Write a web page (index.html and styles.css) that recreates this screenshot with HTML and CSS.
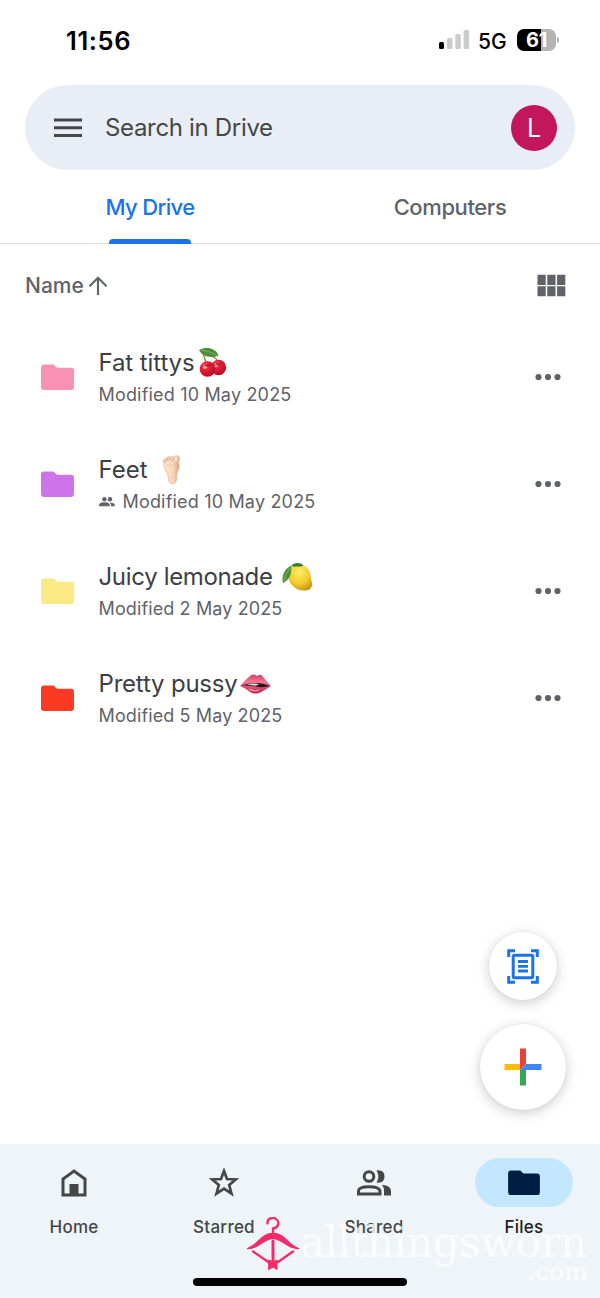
FILE: index.html
```html
<!DOCTYPE html>
<html lang="en">
<head>
<meta charset="utf-8">
<title>My Drive</title>
<link rel="stylesheet" href="styles.css">
</head>
<body>
<div class="screen">
  <header class="status">
    <span class="clock">11:56</span>
    <div class="status-right">
      <svg class="signal" width="31" height="20" viewBox="0 0 31 20"><rect x="0" y="12" width="5" height="7" rx="1.5"/><g fill="#cbcbcb"><rect x="8" y="8" width="5.500" height="11" rx="1.500"/><rect x="16.300" y="4" width="5.500" height="15" rx="1.500"/><rect x="24.600" y="0" width="5.500" height="19" rx="1.500"/></g></svg>
      <span class="network">5G</span>
      <div class="battery"><span class="level">61</span><i class="battery-tip"></i></div>
    </div>
  </header>

  <div class="search">
    <svg class="menu" width="28" height="20" viewBox="0 0 28 20" fill="#444746"><path d="M0 0.500h28v3H0zM0 8.300h28v3H0zM0 16.100h28v3H0z"/></svg>
    <span class="search-text">Search in Drive</span>
    <span class="avatar">L</span>
  </div>

  <nav class="tabs">
    <div class="tab tab-active"><span class="tab-label my-drive">My Drive</span><i class="tab-line"></i></div>
    <div class="tab"><span class="tab-label computers">Computers</span></div>
  </nav>

  <div class="sort">
    <span class="sort-label">Name</span>
    <svg class="arrow" width="20" height="20" viewBox="0 0 20 20" fill="none" stroke="#5f6368" stroke-width="2.100"><path d="M10 19V2M1.500 10.200L10 1.700l8.500 8.500"/></svg>
    <svg class="grid-icon" width="29" height="23" viewBox="0 0 29 23" fill="#5f6368"><path d="M.5.800h8.200v10.200H.500zM10.300.800h8.200v10.200h-8.200zM20.100.800h8.200v10.200h-8.200zM.5 12.300h8.200v10H.500zM10.300 12.300h8.200v10h-8.200zM20.100 12.300h8.200v10h-8.200z"/></svg>
  </div>

  <main class="files">
    <div class="file">
      <svg class="folder pink" viewBox="0 0 33 27"><path d="M3 .500h9.500l3.500 3.200h14a3 3 0 0 1 3 3V23a3 3 0 0 1-3 3H3a3 3 0 0 1-3-3V3.500a3 3 0 0 1 3-3z"/></svg>
      <div class="info">
        <div class="name"><span class="n1">Fat tittys</span>
          <svg class="emoji cherry" width="30" height="32" viewBox="0 0 30 32"><defs><radialGradient id="red" cx=".35" cy=".3" r=".8"><stop stop-color="#ff6a70"/><stop offset=".3" stop-color="#ed2139"/><stop offset="1" stop-color="#ac0a27"/></radialGradient></defs><path d="M4 4Q7 11 8.500 18M10 7q9 4 11 9" fill="none" stroke="#758a30" stroke-width="1.300"/><path d="M1 3C8-1 18 1 20.500 8.500 12 12 4 9 1 3z" fill="#4d8e38"/><path d="M3 3q8 1 16 5" fill="none" stroke="#8bb566" stroke-width=".8"/><circle cx="20.500" cy="20.500" r="7.700" fill="url(#red)"/><circle cx="9.500" cy="22" r="7.800" fill="url(#red)"/><path d="M7 18q3 2 6-.500M18 16.500q3 2 5 0" fill="none" stroke="#8e1024" stroke-width="1"/><ellipse cx="7" cy="20.500" rx="2" ry="1.200" fill="#ffb1b5"/><ellipse cx="18" cy="19.300" rx="1.500" ry="1" fill="#ff969b"/></svg>
        </div>
        <div class="meta"><span class="m1">Modified 10 May 2025</span></div>
      </div>
      <svg class="more" width="26" height="8" viewBox="0 0 26 8"><circle cx="3.500" cy="4" r="3.100"/><circle cx="13" cy="4" r="3.100"/><circle cx="22.500" cy="4" r="3.100"/></svg>
    </div>
    <div class="file">
      <svg class="folder purple" viewBox="0 0 33 27"><path d="M3 .500h9.500l3.500 3.200h14a3 3 0 0 1 3 3V23a3 3 0 0 1-3 3H3a3 3 0 0 1-3-3V3.500a3 3 0 0 1 3-3z"/></svg>
      <div class="info">
        <div class="name"><span class="n2">Feet</span>
          <svg class="emoji foot" width="19" height="32" viewBox="0 0 20 32"><defs><linearGradient id="skin"><stop stop-color="#ffe7d2"/><stop offset=".6" stop-color="#fad5b9"/><stop offset="1" stop-color="#d8a681"/></linearGradient></defs><g fill="url(#skin)" stroke="#d6a686" stroke-width=".6"><path d="M2 8C5 4 17 4 18 10c.5 6-3 8-2.500 14 .4 9-9 8-8.500 2C7 19 1 15 2 8z"/><ellipse cx="15.200" cy="4.500" rx="3.200" ry="3.700"/><circle cx="10.500" cy="3.800" r="2"/><circle cx="7" cy="3.500" r="1.700"/><circle cx="4.200" cy="4.800" r="1.600"/><circle cx="2.300" cy="6.800" r="1.400"/></g><path d="M4 10q5 3 11-1M9 24q3 1 4-1" fill="none" stroke="#eac2a5" stroke-width=".8"/></svg>
        </div>
        <div class="meta"><svg class="people" width="16" height="10" viewBox="0 0 16 10" fill="#5f6368"><circle cx="5.400" cy="2.300" r="2.200"/><circle cx="11" cy="2.300" r="2.200"/><path d="M0 9.300V8q0-1.700 2.600-2.400 2.800-.8 5.600 0Q10.800 6.300 10.800 8v1.300zM12 9.300V8q0-1.500-1.400-2.600 5.100 0 5.100 2.600v1.300z"/></svg><span class="m1">Modified 10 May 2025</span></div>
      </div>
      <svg class="more" width="26" height="8" viewBox="0 0 26 8"><circle cx="3.500" cy="4" r="3.100"/><circle cx="13" cy="4" r="3.100"/><circle cx="22.500" cy="4" r="3.100"/></svg>
    </div>
    <div class="file">
      <svg class="folder yellow" viewBox="0 0 33 27"><path d="M3 .500h9.500l3.500 3.200h14a3 3 0 0 1 3 3V23a3 3 0 0 1-3 3H3a3 3 0 0 1-3-3V3.500a3 3 0 0 1 3-3z"/></svg>
      <div class="info">
        <div class="name"><span class="n3">Juicy lemonade</span>
          <svg class="emoji lemon" width="31" height="30" viewBox="0 0 31 30"><defs><radialGradient id="yellow" cx=".45" cy=".3" r=".8"><stop stop-color="#ffed68"/><stop offset=".55" stop-color="#f4cb2d"/><stop offset="1" stop-color="#bb870d"/></radialGradient></defs><path d="M9 4C15 0 24 2 27.500 9c1 3 1.500 8 2.500 12 1 3-1 4-2 6-4 2.500-12 2.500-17-3C5 19 5 9 9 4z" fill="url(#yellow)"/><path d="M9 4C3 6-1 14 1 21 8 18 10 11 9 4z" fill="#4a9137"/><path d="M9 4Q13-1 20 2L21 4Q15 5 9 4z" fill="#39782c"/><path d="M8 6Q3 12 2 19" stroke="#89b55a" fill="none"/></svg>
        </div>
        <div class="meta"><span class="m3">Modified 2 May 2025</span></div>
      </div>
      <svg class="more" width="26" height="8" viewBox="0 0 26 8"><circle cx="3.500" cy="4" r="3.100"/><circle cx="13" cy="4" r="3.100"/><circle cx="22.500" cy="4" r="3.100"/></svg>
    </div>
    <div class="file">
      <svg class="folder red" viewBox="0 0 33 27"><path d="M3 .500h9.500l3.500 3.200h14a3 3 0 0 1 3 3V23a3 3 0 0 1-3 3H3a3 3 0 0 1-3-3V3.500a3 3 0 0 1 3-3z"/></svg>
      <div class="info">
        <div class="name"><span class="n4">Pretty pussy</span>
          <svg class="emoji lips" width="31" height="20" viewBox="0 0 31 20"><defs><linearGradient id="lip" x2="0" y2="1"><stop stop-color="#d83f69"/><stop offset=".4" stop-color="#ef7995"/><stop offset="1" stop-color="#b62049"/></linearGradient></defs><path d="M0 12Q8 3 12 .500q3-.5 5 1.500 3-2 5-.500 3 4 9 10.500-7 5-12 7-5 1.500-9-1Q5 14 0 12z" fill="url(#lip)"/><path d="M1 11.500Q9 9 16 9t14 3q-7 2-14 .500T1 11.500z" fill="#281519"/><path d="M7 10.500q8-2 12 0-3 1.500-5 1Q11 11 7 10.500z" fill="#ddd"/><path d="M9 15q5 3 10 1" stroke="#f48aa2" stroke-width="1.500" fill="none"/></svg>
        </div>
        <div class="meta"><span class="m3">Modified 5 May 2025</span></div>
      </div>
      <svg class="more" width="26" height="8" viewBox="0 0 26 8"><circle cx="3.500" cy="4" r="3.100"/><circle cx="13" cy="4" r="3.100"/><circle cx="22.500" cy="4" r="3.100"/></svg>
    </div>
  </main>

  <div class="actions">
    <div class="fab scan"><svg width="32" height="35" viewBox="0 0 32 35" fill="none" stroke="#1a73e8" stroke-width="3"><path d="M1.700 8V1.700H8M24 1.700h6.300V8M30.300 27v6.300H24M8 33.300H1.700V27"/><rect x="6.200" y="6.200" width="19.600" height="22.600" rx="1.500"/><path d="M11 12.500h10M11 17.300h10M11 22h10" stroke-width="2.800"/></svg></div>
    <div class="fab add"><svg width="38" height="38" viewBox="0 0 38 38"><path d="M16 .500h6V16l-6 6z" fill="#ea4335"/><path d="M.5 16H16v6H.500z" fill="#fbbc04"/><path d="M16 22h6v15.500h-6z" fill="#34a853"/><path d="M22 16h15.500v6H16z" fill="#4285f4"/></svg></div>
  </div>

  <footer class="bottom">
    <div class="nav">
      <div class="nav-item"><span class="nav-icon"><svg width="26" height="28" viewBox="0 0 26 28"><path d="M2 26V10L13 2l11 8v16z" fill="none" stroke="#444746" stroke-width="3"/><path d="M8.500 15h9v12h-9z" fill="#444746"/></svg></span><span class="nav-label">Home</span></div>
      <div class="nav-item"><span class="nav-icon"><svg width="30" height="29" viewBox="0 0 30 29" fill="none" stroke="#444746" stroke-width="2.700"><path d="M15 3l3 8 8.800.5-6.600 5.500 2.300 8.700L15 20.700l-7.500 5 2.300-8.700-6.600-5.500L12 11z"/></svg></span><span class="nav-label">Starred</span></div>
      <div class="nav-item"><span class="nav-icon"><svg width="34" height="26" viewBox="0 0 34 26" fill="#444746"><circle cx="12" cy="6.500" r="4.800" fill="none" stroke="#444746" stroke-width="3"/><path d="M1.500 24v-3q0-4.300 10.500-4.300T23 21v3z" fill="none" stroke="#444746" stroke-width="3"/><path d="M19.500.400Q27.500-.5 27.500 6.500t-8 6.100Q23.300 6.700 19.500.400zM25 14.800q9 1 9 6.300v4.500h-7v-4.500q0-3.800-2-6.300z"/></svg></span><span class="nav-label">Shared</span></div>
      <div class="nav-item"><span class="nav-icon nav-selected"><svg width="32" height="26" viewBox="0 0 33 27" fill="#001d45"><path d="M3 .500h9.500l3.500 3.200h14a3 3 0 0 1 3 3V23a3 3 0 0 1-3 3H3a3 3 0 0 1-3-3V3.500a3 3 0 0 1 3-3z"/></svg></span><span class="nav-label files-label">Files</span></div>
    </div>
    <div class="home-bar"></div>
    <div class="watermark">
      <svg class="bow" width="54" height="54" viewBox="0 0 54 54" fill="none" stroke="#f52a68" stroke-width="2.300" stroke-linecap="round" stroke-linejoin="round"><path d="M21.500 6.500C21 1 27-.5 30.500 2.500s2 8-3.500 9V17"/><path d="M1.500 31.500C12 28 15 16.500 27 16.500s15 11.500 25.500 15C40 32 38 21.500 27 21.500S14 32 1.500 31.500z" fill="#f52a68" stroke-width="1.300"/><path d="M27 24v20" stroke-width="3"/><path d="M7 34.500l16 11M47 34.500L32 45"/><path d="M23 43l4 2 4-2v9.500l-4-2.500-4 2.500z" fill="#f52a68" stroke-width="1"/></svg>
      <span class="brand">allthingsworn</span><span class="domain">.com</span>
    </div>
  </footer>
</div>
</body>
</html>
```
FILE: styles.css
```css
* { box-sizing: border-box; }
body { margin: 0; background: #fff; font-family: Inter, "Liberation Sans", sans-serif; color: #3c4043; }
svg { display: block; flex: none; }
span { white-space: nowrap; }
.screen { width: 600px; height: 1298px; display: flex; flex-direction: column; position: relative; overflow: hidden; }
.status { height: 85px; padding: 25px 40px 0 66px; display: flex; justify-content: space-between; align-items: flex-start; color: #000; }
.clock { font-size: 25.5px; line-height: 32px; font-weight: 600; letter-spacing: .6px; }
.status-right { display: flex; align-items: center; height: 32px; }
.network { font-size: 21px; margin-left: 8px; width: 30px; font-weight: 500; letter-spacing: -.1px; }
.signal { margin-top: -2px; }
.battery { position: relative; margin-left: 9px; margin-top: -2px; width: 39px; height: 22px; border-radius: 7px; background: linear-gradient(90deg, #000 61%, #b4b4b4 61%); color: #fff; text-align: center; margin-right: 4px; }
.level { display: block; font-size: 20px; line-height: 22px; font-weight: 700; letter-spacing: -.3px; }
.battery-tip { position: absolute; left: 40px; top: 8px; width: 2px; height: 6px; border-radius: 0 2px 2px 0; background: #b4b4b4; }
.search { height: 85px; margin: 0 25px; border-radius: 43px; background: #e8edf6; display: flex; align-items: center; padding: 0 18px 0 29px; }
.search-text { margin-left: 23px; color: #444746; font-size: 24px; letter-spacing: -.33px; }
.avatar { margin-left: auto; width: 46px; height: 46px; border-radius: 50%; background: #c2185b; color: #fff; font-size: 25px; line-height: 47px; text-align: center; }
.tabs { height: 74px; display: grid; grid-template-columns: 1fr 1fr; border-bottom: 1px solid #dadce0; color: #5f6368; }
.tab { display: flex; flex-direction: column; align-items: center; padding-top: 22px; }
.tab-label { font-size: 22px; line-height: 30px; font-weight: 500; }
.my-drive { letter-spacing: -.65px; }
.computers { letter-spacing: -.4px; }
.tab-active { color: #1a73e8; }
.tab-line { width: 82px; height: 5px; margin-top: 17px; border-radius: 4px 4px 0 0; background: #1a73e8; }
.sort { height: 80px; padding: 3px 34px 0 25px; display: flex; align-items: center; color: #5f6368; }
.sort-label { font-size: 21px; font-weight: 500; line-height: 30px; }
.arrow { margin-left: 4px; }
.grid-icon { margin-left: auto; }
.files { display: flex; flex-direction: column; }
.file { height: 107px; padding: 0 39px 0 41px; display: flex; align-items: center; }
.folder { width: 33px; height: 27px; }
.pink { fill: #f891b3; } .purple { fill: #cd74e8; } .yellow { fill: #fbe983; } .red { fill: #fa3a22; }
.info { margin-left: 24.5px; }
.name { height: 34px; display: flex; align-items: center; font-size: 24px; line-height: 34px; }
.n1 { letter-spacing: -.1px; }
.n3 { letter-spacing: -.33px; }
.n4 { letter-spacing: -.2px; }
.meta { height: 30px; display: flex; align-items: center; font-size: 18px; line-height: 30px; color: #5f6368; }
.m1 { letter-spacing: .18px; }
.m3 { letter-spacing: .12px; }
.cherry { margin-left: 3px; }
.foot { margin-left: 14px; }
.lemon { margin-left: 9px; }
.lips { margin-left: 2px; }
.people { margin-right: 8px; }
.more { margin-left: auto; margin-bottom: 2px; fill: #5f6368; }
.actions { margin: auto 34px 34px auto; display: flex; flex-direction: column; align-items: center; gap: 24px; }
.fab { display: flex; align-items: center; justify-content: center; border-radius: 50%; background: #fff; box-shadow: 0 3px 13px rgba(0,0,0,.2), 0 0 2px rgba(0,0,0,.08); }
.scan { width: 68px; height: 68px; }
.add { width: 86px; height: 86px; }
.bottom { height: 154px; background: #eff4f9; position: relative; display: flex; flex-direction: column; align-items: center; }
.nav { width: 600px; padding-top: 14px; display: grid; grid-template-columns: repeat(4, 150px); margin-left: -2px; color: #444746; }
.nav-item { display: flex; flex-direction: column; align-items: center; }
.nav-icon { width: 98px; height: 49px; border-radius: 25px; display: flex; align-items: center; justify-content: center; }
.nav-selected { background: #c2e7ff; }
.nav-label { margin-top: 8px; font-size: 17px; line-height: 24px; font-weight: 500; letter-spacing: .25px; }
.files-label { color: #1f1f1f; }
.home-bar { width: 214px; height: 8px; margin-top: 39px; border-radius: 4px; background: #000; }
.watermark { position: absolute; left: 246px; top: 73px; width: 342px; height: 72px; display: grid; grid-template-columns: 54px 288px; grid-template-rows: 46px 26px; color: rgba(255,255,255,.8); font-family: "DejaVu Serif", serif; }
.brand { font-size: 42px; line-height: 52px; letter-spacing: -.5px; }
.domain { grid-column: 2; justify-self: end; font-size: 25px; line-height: 17px; }
```
